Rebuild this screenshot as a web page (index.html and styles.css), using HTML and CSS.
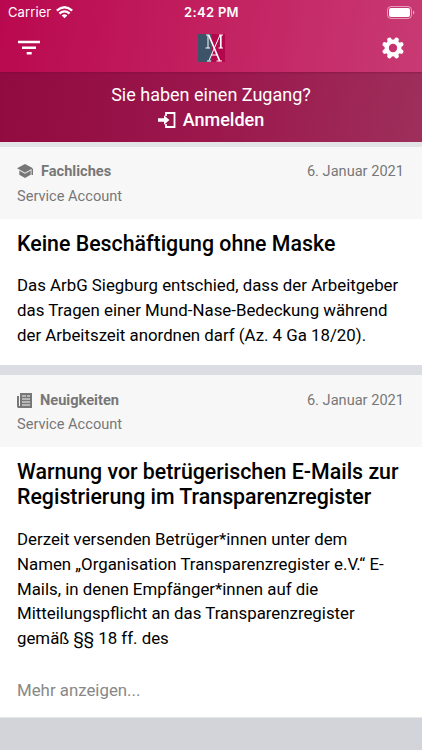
FILE: index.html
```
<!DOCTYPE html>
<html lang="de">
<head>
<meta charset="utf-8">
<title>Neuigkeiten</title>
<link rel="stylesheet" href="styles.css">
</head>
<body>
<header class="top">
  <div class="status">
    <div class="carrier"><span>Carrier</span>
      <svg width="17" height="13" viewBox="0 0 17 13"><g fill="none" stroke="#fff" stroke-width="2.300"><path d="M.8 4.600Q8.500-2 16.200 4.600"/><path d="M3.400 7.500Q8.500 3.200 13.600 7.500"/></g><path d="M5.700 9.400Q8.500 7 11.300 9.400L8.500 12.300Z" fill="#fff"/></svg>
    </div>
    <div class="clock">2:42 PM</div>
    <svg class="battery" width="28" height="13" viewBox="0 0 28 13"><rect x=".5" y=".5" width="24" height="12" rx="3.5" fill="none" stroke="#fff" stroke-opacity=".5"/><rect x="2" y="2" width="21" height="9" rx="2" fill="#fff"/><path d="M26 4.500q1.400.5 1.400 2T26 8.500z" fill="#fff" opacity=".55"/></svg>
  </div>
  <nav class="bar">
    <svg width="22" height="15" viewBox="0 0 22 15" fill="#fff"><path d="M0 .8h22v2.500H0zM4 6.600h14v2.500H4zM8.700 12h5v2.500h-5z"/></svg>
    <svg class="logo" width="27" height="28" viewBox="0 0 27 28"><path fill="#3c5368" d="M0 0h14v28H0z"/><path fill="#b3064c" d="M14 0h13v28H14z"/><g fill="none" stroke="#fff"><path stroke-width="1" d="M10 1v13M8 1h3.300M7.500 14H12M21 1h4M20.500 14H25M22 1l-11 25.500M9 27h4M18.500 27H24M13.300 21h6"/><path stroke-width="1.700" d="M10.700 1l11 26M22.800 1v13"/></g></svg>
    <svg width="22" height="22" viewBox="0 0 22 22"><g fill="#fff"><circle cx="11" cy="11" r="8.500"/><g stroke="#fff" stroke-width="4.600" stroke-linejoin="round"><path d="M7.500 2.900l7 16.200M14.500 2.900l-7 16.200M2.900 7.500l16.200 7M2.900 14.500l16.200-7" stroke-linecap="round"/></g></g><circle cx="11" cy="11" r="4.200" fill="#c7316d"/></svg>
  </nav>
</header>
<section class="login">
  <div class="ask">Sie haben einen Zugang?</div>
  <div class="action"><svg width="18" height="16" viewBox="0 0 18 16"><path d="M8 4V1h8.500v14H8v-3" fill="none" stroke="#fff" stroke-width="1.800"/><path d="M0 6.300h6V3.200L11.400 8 6 12.800V9.700H0z" fill="#fff"/></svg><span>Anmelden</span></div>
</section>
<main>
  <article class="card">
    <div class="meta">
      <div class="row">
        <div class="category"><svg width="16" height="14" viewBox="0 0 16 14" fill="#777"><path d="M8 0l8 4.300L8 8.700 0 4.300z"/><path d="M2.300 6.600L8 9.700l5.700-3.100v4.200L8 14l-5.700-3.200zM14.500 5H16v6h-1.500z"/></svg><b>Fachliches</b></div>
        <time>6. Januar 2021</time>
      </div>
      <div class="author">Service Account</div>
    </div>
    <div class="content">
      <h2>Keine Beschäftigung ohne Maske</h2>
      <p>Das ArbG Siegburg entschied, dass der Arbeitgeber<br>das Tragen einer Mund-Nase-Bedeckung während<br>der Arbeitszeit anordnen darf (Az. 4 Ga 18/20).</p>
    </div>
  </article>
  <article class="card">
    <div class="meta">
      <div class="row">
        <div class="category"><svg width="15" height="15" viewBox="0 0 15 15"><path d="M3 0h12v15H1.500Q0 15 0 13V3h2v10h1z" fill="#777"/><path d="M5 3h4M5 6h8M5 9h8M5 12h8M10 3h3" stroke="#f7f7f7" stroke-width="1.100"/></svg><b>Neuigkeiten</b></div>
        <time>6. Januar 2021</time>
      </div>
      <div class="author">Service Account</div>
    </div>
    <div class="content">
      <h2>Warnung vor betrügerischen E-Mails zur<br>Registrierung im Transparenzregister</h2>
      <p>Derzeit versenden Betrüger*innen unter dem<br>Namen „Organisation Transparenzregister e.V.“ E-<br>Mails, in denen Empfänger*innen auf die<br>Mitteilungspflicht an das Transparenzregister<br>gemäß §§ 18 ff. des</p>
      <div class="more">Mehr anzeigen...</div>
    </div>
  </article>
</main>
</body>
</html>
```
FILE: styles.css
```
* { box-sizing: border-box; }
body { margin: 0; height: 750px; overflow: hidden; background: #d2d4d9; font-family: Roboto, sans-serif; color: #000; white-space: nowrap; }
svg { display: block; flex: none; }
.top { height: 72px; color: #fff; background: linear-gradient(100deg, #b9084f, #c2205f 48%, #c83a73); }
.status { height: 24px; padding: 0 7px 0 8px; display: grid; grid-template-columns: 1fr auto 1fr; align-items: center; font-family: Inter, sans-serif; font-size: 13px; }
.carrier { display: flex; align-items: center; gap: 5px; letter-spacing: .1px; }
.clock { font-weight: 600; letter-spacing: .3px; }
.battery { justify-self: end; }
.bar { height: 47px; padding: 0 18px; display: grid; grid-template-columns: 1fr auto 1fr; align-items: center; }
.bar > :last-child { justify-self: end; }
.login { height: 70px; padding-top: 11px; color: #fff; text-align: center; font-size: 18px; line-height: 23px; background: linear-gradient(100deg, #910a40, #9b174c 50%, #9e2f5b); box-shadow: inset 0 2px 2px -1px #70083860; }
.action { display: flex; justify-content: center; align-items: center; gap: 7px; height: 27px; font-weight: 500; }
main { border-top: 5px solid #e3e4e6; }
.card + .card { border-top: 10px solid #dadde1; }
.card { background: #fff; }
.meta { height: 72px; padding: 12px 18px 0 17px; background: #f7f7f7; color: #777; font-size: 14.6px; line-height: 24px; }
.row, .category { display: flex; align-items: center; }
.row { justify-content: space-between; height: 24px; }
.category { gap: 8px; }
.author { line-height: 26px; }
.content { padding: 12px 17px 0; }
h2 { margin: 0 0 17px; font-size: 21.34px; line-height: 25px; font-weight: 500; }
p { margin: 0; font-size: 16.84px; line-height: 24.75px; }
.card:first-child .content { height: 146px; }
.card:last-child .meta { padding-top: 13px; }
.card:last-child .author { line-height: 25px; }
.card:last-child h2 { margin-bottom: 18px; }
.card:last-child .content { height: 271px; border-bottom: 1px solid #e5e6e8; }
.more { margin-top: 27px; color: #888; font-size: 16.84px; line-height: 25px; }
```
